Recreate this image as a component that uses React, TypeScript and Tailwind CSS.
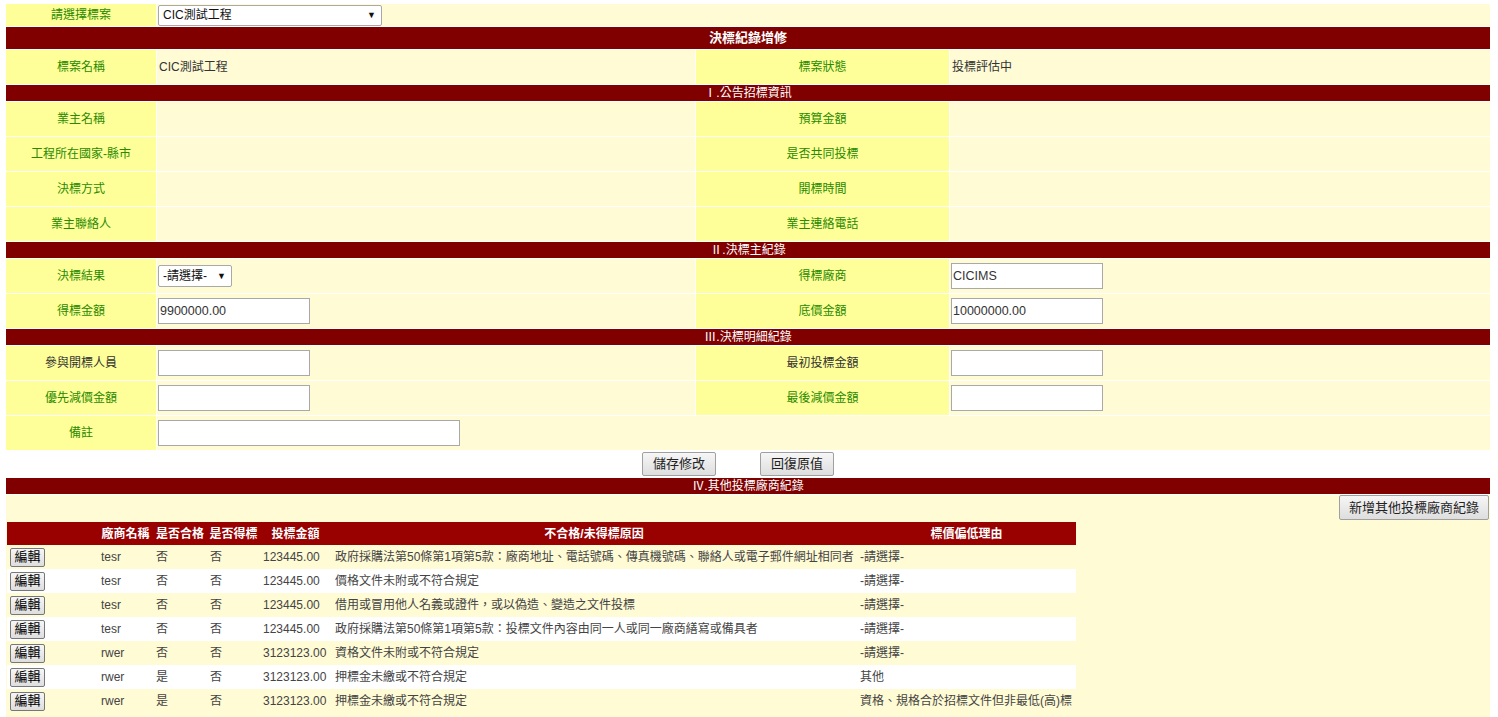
import React from "react";

const LBL = "bg-[#ffff99] text-[#2a8a00] flex items-center justify-center text-[12px]";
const VAL = "bg-[#fffbd5] text-[#333] flex items-center pl-[2px] text-[12px]";
const BAR = "bg-[#800000] text-white flex items-center justify-center text-[12px] h-[16px] leading-none";

function Input({ w = 152, value = "" }: { w?: number; value?: string }) {
  return (
    <div
      className="-ml-[1px] h-[26px] bg-white border border-[#a9a9a9] flex items-center pl-[1px] text-[12.5px] text-[#333]"
      style={{ width: w }}
    >
      {value}
    </div>
  );
}

function Select({ w, h, value }: { w: number; h: number; value: string }) {
  return (
    <div
      className="-ml-[1px] bg-white border border-[#a9a9a9] rounded-[2px] flex items-center justify-between pl-[4px] pr-[5px] text-[12px] text-[#111]"
      style={{ width: w, height: h }}
    >
      <span>{value}</span>
      <span className="text-[9px] leading-none">▼</span>
    </div>
  );
}

function Btn({ children, cls }: { children: React.ReactNode; cls: string }) {
  return (
    <div
      className={
        "flex items-center justify-center border border-[#a0a0a0] rounded-[2px] bg-gradient-to-b from-[#f6f6f6] to-[#dedede] text-[#222] " +
        cls
      }
    >
      {children}
    </div>
  );
}

type Pair = [string, React.ReactNode, string, React.ReactNode, boolean?, boolean?];

function Row({ r, h = 34 }: { r: Pair; h?: number }) {
  return (
    <div className="grid grid-cols-[150px_538px_253px_540px] gap-[1px]" style={{ height: h }}>
      <div className={LBL + (r[4] ? " !text-[#333]" : "")}>{r[0]}</div>
      <div className={VAL}>{r[1]}</div>
      <div className={LBL + (r[5] ? " !text-[#333]" : "")}>{r[2]}</div>
      <div className={VAL}>{r[3]}</div>
    </div>
  );
}

const rows: [string, string, string, string, string, string][] = [
  ["tesr", "否", "否", "123445.00", "政府採購法第50條第1項第5款：廠商地址、電話號碼、傳真機號碼、聯絡人或電子郵件網址相同者", "-請選擇-"],
  ["tesr", "否", "否", "123445.00", "價格文件未附或不符合規定", "-請選擇-"],
  ["tesr", "否", "否", "123445.00", "借用或冒用他人名義或證件，或以偽造、變造之文件投標", "-請選擇-"],
  ["tesr", "否", "否", "123445.00", "政府採購法第50條第1項第5款：投標文件內容由同一人或同一廠商繕寫或備具者", "-請選擇-"],
  ["rwer", "否", "否", "3123123.00", "資格文件未附或不符合規定", "-請選擇-"],
  ["rwer", "是", "否", "3123123.00", "押標金未繳或不符合規定", "其他"],
  ["rwer", "是", "否", "3123123.00", "押標金未繳或不符合規定", "資格、規格合於招標文件但非最低(高)標"],
];

const COLS = "grid grid-cols-[91px_55px_54px_53px_71px_526px_219px]";

export default function App() {
  return (
    <div className="min-h-[717px] bg-white font-['Liberation_Sans','Noto_Sans_CJK_TC',sans-serif] pt-[4px] pl-[6px]">
      <div className="w-[1484px] flex flex-col gap-[1px]">
        <div className="grid grid-cols-[150px_1333px] gap-[1px] h-[22px]">
          <div className={LBL}>請選擇標案</div>
          <div className="bg-[#fffbd5] flex items-center pl-[2px]">
            <Select w={224} h={21} value="CIC測試工程" />
          </div>
        </div>
        <div className="bg-[#800000] text-white flex items-center justify-center text-[13px] font-bold h-[22px]">
          決標紀錄增修
        </div>
        <Row r={["標案名稱", "CIC測試工程", "標案狀態", "投標評估中"]} />
        <div className={BAR}>Ⅰ.公告招標資訊</div>
        <Row r={["業主名稱", "", "預算金額", ""]} />
        <Row r={["工程所在國家-縣市", "", "是否共同投標", ""]} />
        <Row r={["決標方式", "", "開標時間", ""]} />
        <Row r={["業主聯絡人", "", "業主連絡電話", ""]} />
        <div className={BAR}>Ⅱ.決標主紀錄</div>
        <Row r={["決標結果", <Select w={74} h={22} value="-請選擇-" />, "得標廠商", <Input value="CICIMS" />]} />
        <Row r={["得標金額", <Input value="9900000.00" />, "底價金額", <Input value="10000000.00" />]} />
        <div className={BAR}>Ⅲ.決標明細紀錄</div>
        <Row r={["參與開標人員", <Input />, "最初投標金額", <Input />, true, true]} />
        <Row r={["優先減價金額", <Input />, "最後減價金額", <Input />]} />
        <div className="grid grid-cols-[150px_1333px] gap-[1px] h-[34px]">
          <div className={LBL}>備註</div>
          <div className={VAL}>
            <Input w={302} />
          </div>
        </div>
        <div className="h-[26px] flex items-center justify-center gap-[44px] pr-[20px] bg-white">
          <Btn cls="w-[74px] h-[24px] text-[13px]">儲存修改</Btn>
          <Btn cls="w-[74px] h-[24px] text-[13px]">回復原值</Btn>
        </div>
        <div className={BAR}>Ⅳ.其他投標廠商紀錄</div>
        <div className="bg-[#fffbd5] flex flex-col pb-[10px]">
          <div className="h-[27px] flex justify-end items-start pr-[1px]">
            <Btn cls="w-[150px] h-[25px] text-[13px]">新增其他投標廠商紀錄</Btn>
          </div>
          <div className="ml-[1px] w-[1069px] flex flex-col">
            <div className={COLS + " h-[23px] bg-[#990000] text-white text-[12px] font-bold items-center"}>
              <div></div>
              <div className="text-center">廠商名稱</div>
              <div className="text-center">是否合格</div>
              <div className="text-center">是否得標</div>
              <div className="text-center">投標金額</div>
              <div className="text-center">不合格/未得標原因</div>
              <div className="text-center">標價偏低理由</div>
            </div>
            {rows.map((r, i) => (
              <div
                key={i}
                className={
                  COLS +
                  " h-[24px] items-center text-[12px] text-[#444] " +
                  (i % 2 === 0 ? "bg-[#fffbd5]" : "bg-white")
                }
              >
                <div className="pl-[3px]">
                  <Btn cls="w-[35px] h-[19px] text-[13px] !text-black !border-[#777]">編輯</Btn>
                </div>
                <div className="pl-[3px]">{r[0]}</div>
                <div className="pl-[3px]">{r[1]}</div>
                <div className="pl-[3px]">{r[2]}</div>
                <div className="pl-[3px]">{r[3]}</div>
                <div className="pl-[4px] whitespace-nowrap">{r[4]}</div>
                <div className="pl-[3px] whitespace-nowrap">{r[5]}</div>
              </div>
            ))}
          </div>
        </div>
      </div>
    </div>
  );
}
